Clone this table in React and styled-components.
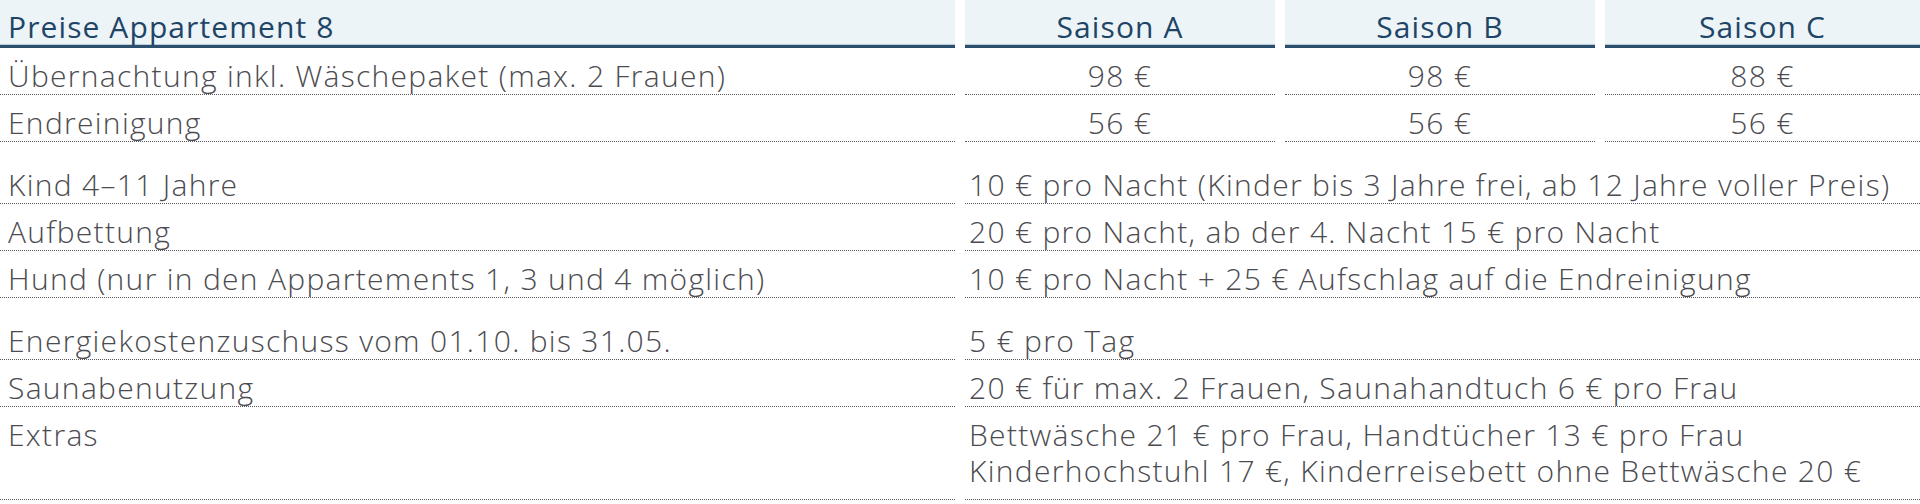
import styled, { createGlobalStyle } from 'styled-components';

const GlobalStyle = createGlobalStyle`
    html, body {
        margin: 0;
        padding: 0;
        background: #fff;
    }
    body {
        font-family: "Open Sans", "Liberation Sans", sans-serif;
    }
`;

const rows = [
    { label: 'Übernachtung inkl. Wäschepaket (max. 2 Frauen)', prices: ['98 €', '98 €', '88 €'] },
    { label: 'Endreinigung', prices: ['56 €', '56 €', '56 €'] },
    { spacer: true },
    { label: 'Kind 4–11 Jahre', text: ['10 € pro Nacht (Kinder bis 3 Jahre frei, ab 12 Jahre voller Preis)'] },
    { label: 'Aufbettung', text: ['20 € pro Nacht, ab der 4. Nacht 15 € pro Nacht'] },
    { label: 'Hund (nur in den Appartements 1, 3 und 4 möglich)', text: ['10 € pro Nacht + 25 € Aufschlag auf die Endreinigung'] },
    { spacer: true },
    { label: 'Energiekostenzuschuss vom 01.10. bis 31.05.', text: ['5 € pro Tag'] },
    { label: 'Saunabenutzung', text: ['20 € für max. 2 Frauen, Saunahandtuch 6 € pro Frau'] },
    {
        label: 'Extras',
        text: ['Bettwäsche 21 € pro Frau, Handtücher 13 € pro Frau', 'Kinderhochstuhl 17 €, Kinderreisebett ohne Bettwäsche 20 €'],
        tall: true,
    },
];

function App() {
    return (
        <>
            <GlobalStyle />
            <Table>
                <Head>Preise Appartement 8</Head>
                <Head $center>Saison A</Head>
                <Head $center>Saison B</Head>
                <Head $center>Saison C</Head>
                {rows.map((row, i) => {
                    if (row.spacer) return <Spacer key={i} />;
                    return [
                        <Cell key={i + 'l'} $tall={row.tall}>{row.label}</Cell>,
                        row.prices
                            ? row.prices.map((p, j) => (
                                  <Cell key={i + 'p' + j} $center>
                                      {p}
                                  </Cell>
                              ))
                            : (
                                  <Cell key={i + 't'} $span $tall={row.tall}>
                                      {row.text.map((t, j) => (
                                          <Line key={j}>{t}</Line>
                                      ))}
                                  </Cell>
                              ),
                    ];
                })}
            </Table>
        </>
    );
}

const Table = styled.div`
    display: grid;
    grid-template-columns: 955px 310px 310px 315px;
    column-gap: 10px;
    width: 1920px;
    font-size: 30px;
    line-height: 36px;
    letter-spacing: 1.3px;
`;

const Head = styled.div`
    padding: 9px 8px 0;
    height: 36px;
    background: #ecf4f8;
    border-bottom: 3px solid #2c4f6e;
    box-shadow: inset 0 -1px 0 #b9cddb;
    color: #1e4566;
    font-weight: 400;
    letter-spacing: 1.1px;
    text-align: ${(p) => (p.$center ? 'center' : 'left')};
    white-space: nowrap;
`;

const Cell = styled.div`
    padding: 10px ${(p) => (p.$span ? '4px' : '8px')} ${(p) => (p.$tall ? '10px' : '0')};
    border-bottom: 1px dotted #55555a;
    color: #4b4b50;
    font-weight: 300;
    white-space: nowrap;
    text-align: ${(p) => (p.$center ? 'center' : 'left')};
    grid-column: ${(p) => (p.$span ? '2 / -1' : 'auto')};
`;

const Line = styled.div``;

const Spacer = styled.div`
    grid-column: 1 / -1;
    height: 15px;
`;

export default App;
